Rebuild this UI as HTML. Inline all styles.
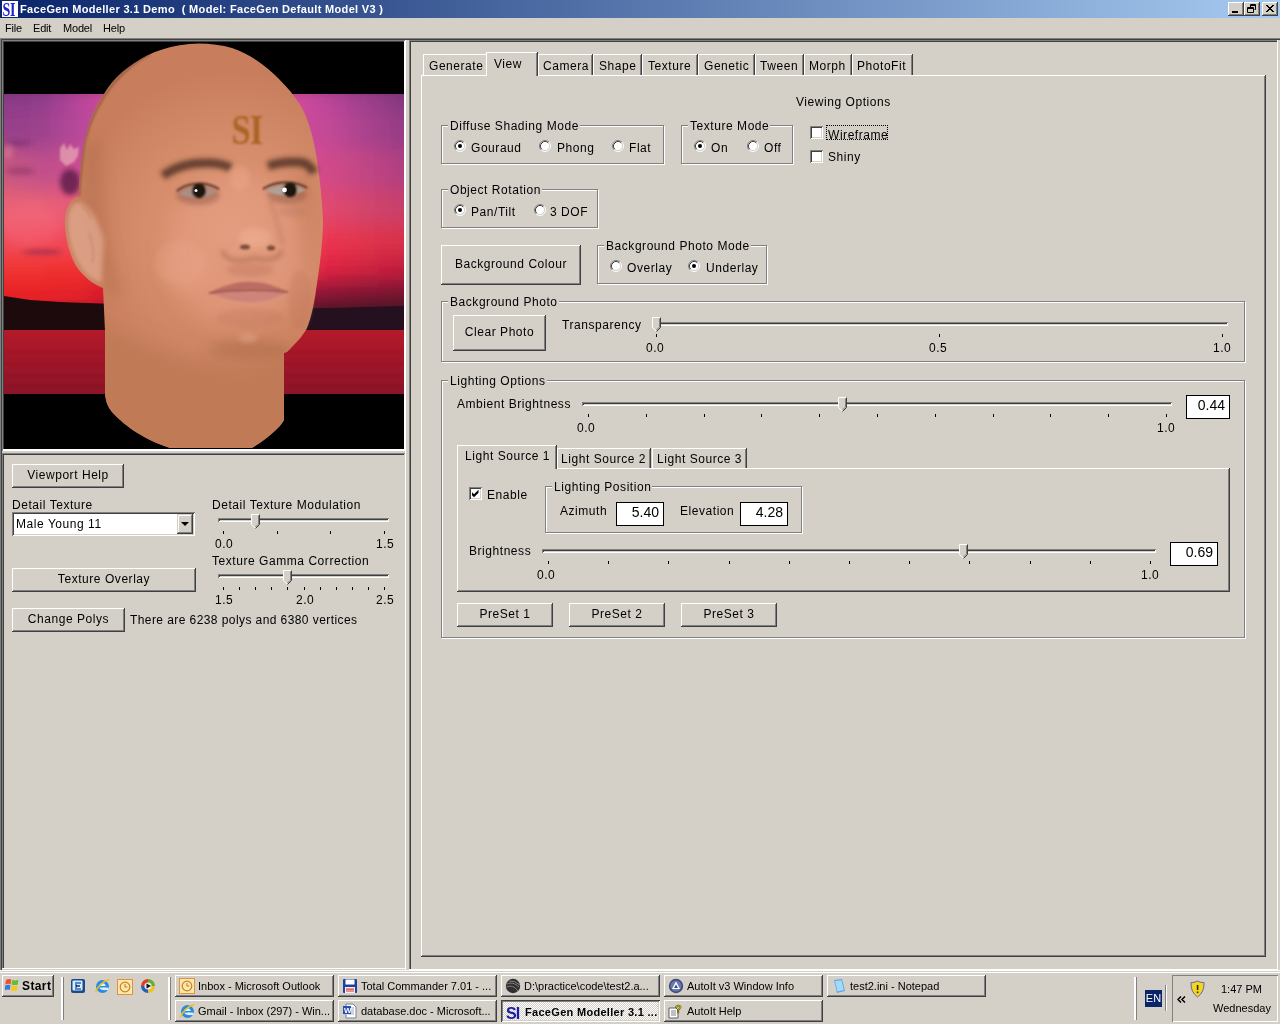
<!DOCTYPE html>
<html><head><meta charset="utf-8">
<style>
*{box-sizing:border-box}
html,body{margin:0;padding:0}
body{width:1280px;height:1024px;position:relative;overflow:hidden;will-change:transform;background:#d4d0c8;font-family:"Liberation Sans",sans-serif;color:#000}
.a{position:absolute}
.t{position:absolute;font-size:12px;letter-spacing:0.55px;line-height:14px;white-space:nowrap}
.s{position:absolute;font-size:11px;line-height:13px;white-space:nowrap}
.btn{position:absolute;background:#d4d0c8;box-shadow:inset -1px -1px #404040,inset 1px 1px #fff,inset -2px -2px #808080,inset 2px 2px #d4d0c8;font-size:12px;letter-spacing:0.55px;line-height:14px;white-space:nowrap;text-align:center}
.grp{position:absolute;border:1px solid #808080;box-shadow:1px 1px #fff,inset 1px 1px #fff}
.gl{position:absolute;font-size:12px;letter-spacing:0.55px;line-height:14px;white-space:nowrap;background:#d4d0c8;padding:0 1px 0 2px}
.edit{position:absolute;background:#fff;border:1px solid #000;font-size:14px;letter-spacing:0px;line-height:14px;text-align:right;white-space:nowrap}
.chk{position:absolute;width:13px;height:13px;background:#fff;box-shadow:inset 1px 1px #808080,inset -1px -1px #fff,inset 2px 2px #404040,inset -2px -2px #d4d0c8}
.trk{position:absolute;height:4px;box-shadow:inset 1px 1px #808080,inset -1px -1px #fff,inset 2px 2px #404040,inset -2px -2px #d4d0c8}
.tk{position:absolute;width:1px;height:3px;background:#000}
.tab{position:absolute;background:#d4d0c8;border-top:1px solid #fff;border-left:1px solid #fff;box-shadow:inset -1px 0 #808080,1px 0 #404040}
.hl{position:absolute;height:1px}
.vl{position:absolute;width:1px}
</style></head>
<body>
<!-- title bar -->
<div class="a" style="left:0;top:0;width:1280px;height:18px;background:linear-gradient(to right,#0a246a,#a6caf0)"></div>
<svg class="a" style="left:2px;top:1px" width="16" height="16" viewBox="0 0 16 16"><rect width="16" height="16" fill="#fff"/><text transform="translate(0.6 15.2) scale(0.74 1)" font-family="Liberation Serif" font-weight="bold" font-size="19" fill="#2222cc" letter-spacing="-0.5">SI</text></svg>

<div class="s" style="left:20px;top:3px;font-weight:bold;color:#fff;letter-spacing:0.33px">FaceGen Modeller 3.1 Demo&nbsp; ( Model: FaceGen Default Model V3 )</div>


<!-- caption buttons -->
<div class="btn" style="left:1228px;top:2px;width:16px;height:14px"></div>
<div class="a" style="left:1232px;top:11px;width:6px;height:2px;background:#000"></div>
<div class="btn" style="left:1244px;top:2px;width:16px;height:14px"></div>
<svg class="a" style="left:1247px;top:4px" width="10" height="10" viewBox="0 0 10 10"><path d="M3.5 0.5 H8.5 V5.5 H7.5 M3.5 1.5 H8.5 M3.5 0.5 V3" fill="none" stroke="#000"/><path d="M0.5 3.5 H6.5 V8.5 H0.5 Z M0.5 4.5 H6.5" fill="none" stroke="#000"/></svg>
<div class="btn" style="left:1262px;top:2px;width:16px;height:14px"></div>
<svg class="a" style="left:1265px;top:4px" width="10" height="9" viewBox="0 0 10 9"><path d="M1 1 L8 8 M2 1 L9 8 M8 1 L1 8 M9 1 L2 8" fill="none" stroke="#000" stroke-width="1"/></svg>

<!-- menu -->
<div class="s" style="left:5px;top:22px;letter-spacing:-0.2px">File</div>
<div class="s" style="left:33px;top:22px;letter-spacing:-0.2px">Edit</div>
<div class="s" style="left:63px;top:22px;letter-spacing:-0.2px">Model</div>
<div class="s" style="left:103px;top:22px;letter-spacing:-0.2px">Help</div>



<!-- viewport -->
<svg class="a" style="left:4px;top:42px" width="400" height="407" viewBox="4 42 400 407">
<defs>
<linearGradient id="sr0" x1="4" y1="0" x2="404" y2="0" gradientUnits="userSpaceOnUse"><stop offset="0.000" stop-color="#8a3a88"/><stop offset="0.090" stop-color="#8e3c8a"/><stop offset="0.190" stop-color="#b8449a"/><stop offset="0.265" stop-color="#d04a9c"/><stop offset="0.740" stop-color="#d04a9c"/><stop offset="0.815" stop-color="#b8449a"/><stop offset="0.915" stop-color="#9a3e8a"/><stop offset="1.000" stop-color="#84387f"/></linearGradient>
<linearGradient id="sr1" x1="4" y1="0" x2="404" y2="0" gradientUnits="userSpaceOnUse"><stop offset="0.000" stop-color="#98408a"/><stop offset="0.090" stop-color="#9c428c"/><stop offset="0.190" stop-color="#b8489a"/><stop offset="0.265" stop-color="#c84a98"/><stop offset="0.740" stop-color="#cc4a98"/><stop offset="0.815" stop-color="#c24896"/><stop offset="0.915" stop-color="#a8428c"/><stop offset="1.000" stop-color="#963c86"/></linearGradient>
<linearGradient id="sr2" x1="4" y1="0" x2="404" y2="0" gradientUnits="userSpaceOnUse"><stop offset="0.000" stop-color="#c85880"/><stop offset="0.090" stop-color="#c0508a"/><stop offset="0.190" stop-color="#c85090"/><stop offset="0.265" stop-color="#d05090"/><stop offset="0.740" stop-color="#d84c8c"/><stop offset="0.815" stop-color="#d04a88"/><stop offset="0.915" stop-color="#c04484"/><stop offset="1.000" stop-color="#b04080"/></linearGradient>
<linearGradient id="sr3" x1="4" y1="0" x2="404" y2="0" gradientUnits="userSpaceOnUse"><stop offset="0.000" stop-color="#e86272"/><stop offset="0.090" stop-color="#e86074"/><stop offset="0.190" stop-color="#e85a78"/><stop offset="0.265" stop-color="#e85478"/><stop offset="0.740" stop-color="#e84c74"/><stop offset="0.815" stop-color="#e0486e"/><stop offset="0.915" stop-color="#d0446c"/><stop offset="1.000" stop-color="#c8406a"/></linearGradient>
<linearGradient id="sr4" x1="4" y1="0" x2="404" y2="0" gradientUnits="userSpaceOnUse"><stop offset="0.000" stop-color="#f04c58"/><stop offset="0.090" stop-color="#f04a58"/><stop offset="0.190" stop-color="#f24858"/><stop offset="0.265" stop-color="#f04458"/><stop offset="0.740" stop-color="#f03c54"/><stop offset="0.815" stop-color="#ea3650"/><stop offset="0.915" stop-color="#e0344c"/><stop offset="1.000" stop-color="#d83048"/></linearGradient>
<linearGradient id="sr5" x1="4" y1="0" x2="404" y2="0" gradientUnits="userSpaceOnUse"><stop offset="0.000" stop-color="#f03430"/><stop offset="0.090" stop-color="#f03430"/><stop offset="0.190" stop-color="#f0302e"/><stop offset="0.265" stop-color="#e82a3c"/><stop offset="0.740" stop-color="#e82842"/><stop offset="0.815" stop-color="#e02442"/><stop offset="0.915" stop-color="#d02040"/><stop offset="1.000" stop-color="#c41e3c"/></linearGradient>
<linearGradient id="sr6" x1="4" y1="0" x2="404" y2="0" gradientUnits="userSpaceOnUse"><stop offset="0.000" stop-color="#e82428"/><stop offset="0.090" stop-color="#e82428"/><stop offset="0.190" stop-color="#e4222a"/><stop offset="0.265" stop-color="#d81c30"/><stop offset="0.740" stop-color="#a01a38"/><stop offset="0.815" stop-color="#901838"/><stop offset="0.915" stop-color="#801834"/><stop offset="1.000" stop-color="#781832"/></linearGradient>
<linearGradient id="sr7" x1="4" y1="0" x2="404" y2="0" gradientUnits="userSpaceOnUse"><stop offset="0.000" stop-color="#e01c24"/><stop offset="0.090" stop-color="#e01c24"/><stop offset="0.190" stop-color="#d81a26"/><stop offset="0.265" stop-color="#c01828"/><stop offset="0.740" stop-color="#601830"/><stop offset="0.815" stop-color="#501828"/><stop offset="0.915" stop-color="#501828"/><stop offset="1.000" stop-color="#501828"/></linearGradient>
<clipPath id="skyclip"><rect x="4" y="94" width="400" height="216"/></clipPath>
<linearGradient id="sea" x1="0" y1="330" x2="0" y2="394" gradientUnits="userSpaceOnUse">
<stop offset="0" stop-color="#b41a2a"/><stop offset="0.5" stop-color="#a01628"/><stop offset="1" stop-color="#8c1428"/>
</linearGradient>
<radialGradient id="skin" cx="230" cy="230" r="160" gradientUnits="userSpaceOnUse">
<stop offset="0" stop-color="#e09a7a"/><stop offset="0.55" stop-color="#d48c6a"/><stop offset="1" stop-color="#c87e5c"/>
</radialGradient>
<linearGradient id="neck" x1="0" y1="340" x2="0" y2="448" gradientUnits="userSpaceOnUse">
<stop offset="0" stop-color="#c98060"/><stop offset="1" stop-color="#c07c58"/>
</linearGradient>
<filter id="vb" x="-10%" y="-10%" width="120%" height="120%"><feGaussianBlur stdDeviation="6 10"/></filter>
<filter id="b1" x="-50%" y="-50%" width="200%" height="200%"><feGaussianBlur stdDeviation="1.2"/></filter>
<filter id="b2" x="-50%" y="-50%" width="200%" height="200%"><feGaussianBlur stdDeviation="2.5"/></filter>
<filter id="b3" x="-50%" y="-50%" width="200%" height="200%"><feGaussianBlur stdDeviation="6"/></filter>
<filter id="b4" x="-50%" y="-50%" width="200%" height="200%"><feGaussianBlur stdDeviation="10"/></filter>
</defs>
<rect x="4" y="41" width="400" height="408" fill="#000"/>
<g clip-path="url(#skyclip)"><g filter="url(#vb)">
<rect x="-20" y="80" width="440" height="32" fill="url(#sr0)"/>
<rect x="-20" y="112" width="440" height="38" fill="url(#sr1)"/>
<rect x="-20" y="150" width="440" height="40" fill="url(#sr2)"/>
<rect x="-20" y="190" width="440" height="35" fill="url(#sr3)"/>
<rect x="-20" y="225" width="440" height="30" fill="url(#sr4)"/>
<rect x="-20" y="255" width="440" height="25" fill="url(#sr5)"/>
<rect x="-20" y="280" width="440" height="20" fill="url(#sr6)"/>
<rect x="-20" y="300" width="440" height="20" fill="url(#sr7)"/>
</g>
<g filter="url(#b3)">
<ellipse cx="30" cy="225" rx="30" ry="22" fill="#f87080" opacity="0.35"/>
</g>
<g filter="url(#b2)">
<ellipse cx="18" cy="143" rx="14" ry="3" fill="#6a2868" opacity="0.5"/>
<ellipse cx="20" cy="171" rx="14" ry="4" fill="#7a2a5a" opacity="0.45"/>
<ellipse cx="70" cy="182" rx="10" ry="13" fill="#5a1a48" opacity="0.8"/>
<ellipse cx="42" cy="252" rx="20" ry="2.5" fill="#902a48" opacity="0.7"/>
<ellipse cx="8" cy="152" rx="5" ry="7" fill="#f09090" opacity="0.4"/>
</g>
<g filter="url(#b1)">
<path d="M60 148 L64 143 L67 150 L70 144 L74 149 L79 147 L78 156 L74 162 L66 166 L60 160 Z" fill="#f0b0b8" opacity="0.65"/>
</g>
</g>
<!-- land -->
<path d="M4 296 L30 300 L60 302 L100 303.5 L150 305 L300 309 L404 307 L404 331 L4 331 Z" fill="#1c0a0c"/>
<path d="M296 309 L404 306 L404 331 L296 331 Z" fill="#24101e"/>
<rect x="4" y="330" width="400" height="64" fill="url(#sea)"/>
<g opacity="0.22" stroke="#500818" stroke-width="1.2" filter="url(#b1)">
<line x1="4" y1="352" x2="404" y2="352"/><line x1="4" y1="364" x2="404" y2="364"/><line x1="4" y1="375" x2="404" y2="375"/><line x1="4" y1="386" x2="404" y2="386"/>
</g>
<!-- head -->
<path d="M199 43.5 C172 44 150 52 133 64 C118 74 110 84 104 94 C96 105 90 118 86 135 C82 150 80 170 78.5 196 C72 198 66 205 65 218 C64 232 68 252 76 266 C83 276 92 284 103 288 L105 330 L105 394 C106 402 108 407 112 412 C122 423 140 438 170 448 L252 448 C265 440 280 428 284 420 L284 353 L287 352 C296 343 303 336 307 328 C311 318 314 305 316 290 C320 265 323 240 323 220 C322 200 320 180 317 160 C314 140 310 125 304 112 C298 100 290 90 278 78 C265 65 250 54 232 48 C222 45 210 43.5 199 43.5 Z" fill="url(#skin)"/>
<clipPath id="headclip"><path d="M199 43.5 C172 44 150 52 133 64 C118 74 110 84 104 94 C96 105 90 118 86 135 C82 150 80 170 78.5 196 C72 198 66 205 65 218 C64 232 68 252 76 266 C83 276 92 284 103 288 L105 330 L105 394 C106 402 108 407 112 412 C122 423 140 438 170 448 L252 448 C265 440 280 428 284 420 L284 353 L287 352 C296 343 303 336 307 328 C311 318 314 305 316 290 C320 265 323 240 323 220 C322 200 320 180 317 160 C314 140 310 125 304 112 C298 100 290 90 278 78 C265 65 250 54 232 48 C222 45 210 43.5 199 43.5 Z"/></clipPath>
<g clip-path="url(#headclip)">
<g filter="url(#b4)">
<path d="M90 320 C140 345 200 372 250 368 C270 366 284 358 300 345 L300 460 L90 460 Z" fill="#c07a56"/>
</g>
<g filter="url(#b3)">
<path d="M84 140 C80 180 82 220 95 260 L110 300 L122 292 C110 250 102 200 104 140 Z" fill="#b06c4c" opacity="0.4"/>
<ellipse cx="250" cy="350" rx="42" ry="10" fill="#a86848" opacity="0.5"/>
<ellipse cx="185" cy="270" rx="25" ry="22" fill="#e8a080" opacity="0.35"/>
<ellipse cx="305" cy="220" rx="12" ry="50" fill="#c07858" opacity="0.4"/>
</g>
<g filter="url(#b1)"><path d="M150 54 C138 60 125 70 113 84 C100 100 90 120 85 140 C81 160 80 180 79 196" fill="none" stroke="#7a4a36" stroke-width="2" opacity="0.7"/></g>
<!-- ear -->
<g filter="url(#b2)">
<path d="M76 202 C69 206 66 215 67 228 C68 245 74 262 84 273 C90 279 96 282 101 284 L104 240 C100 225 92 205 76 202 Z" fill="#e0a890" opacity="0.75"/>
</g>
<g filter="url(#b1)">
<path d="M83 208 C89 212 90 216 90 220" fill="none" stroke="#8a5a48" stroke-width="1.3" opacity="0.6" stroke-dasharray="1.5 2"/>
<path d="M89 233 C93 243 94 255 92 262" fill="none" stroke="#8a5a48" stroke-width="1.3" opacity="0.6" stroke-dasharray="1.5 2"/>
<path d="M78 200 C71 203 67 210 67 222 C67 238 72 254 80 266 C86 275 94 281 101 284" fill="none" stroke="#b07058" stroke-width="1" opacity="0.5"/>
</g>
</g>
<!-- SI -->
<text x="0" y="0" transform="translate(231.5 143.5) scale(0.86 1.05)" font-family="Liberation Serif" font-weight="bold" font-size="40" fill="#ac6426" letter-spacing="-1" filter="url(#b1)">SI</text>
<!-- brows -->
<g filter="url(#b4)">
<ellipse cx="238" cy="250" rx="70" ry="75" fill="#e8a088" opacity="0.45"/>
</g>
<g filter="url(#b2)">
<path d="M163 176 C173 168 188 163 206 163 C218 163 226 165 231 168" fill="none" stroke="#4a2a20" stroke-width="9" opacity="0.8"/>
<path d="M268 166 C279 162 294 161 304 163 C309 165 312 169 314 173" fill="none" stroke="#4a2a20" stroke-width="9" opacity="0.8"/>
<ellipse cx="198" cy="195" rx="22" ry="10" fill="#8a5444" opacity="0.45"/>
<ellipse cx="287" cy="194" rx="20" ry="10" fill="#8a5444" opacity="0.45"/>
<ellipse cx="292" cy="212" rx="14" ry="5" fill="#9a6050" opacity="0.2"/>
<ellipse cx="240" cy="178" rx="10" ry="12" fill="#f0b090" opacity="0.35"/>
<path d="M222 250 C225 262 240 262 255 258 C270 262 280 258 282 250" fill="none" stroke="#9a5a48" stroke-width="4" opacity="0.5"/>
<ellipse cx="255" cy="238" rx="16" ry="10" fill="#f0b498" opacity="0.5"/>
<path d="M270 200 C275 215 280 230 283 245" fill="none" stroke="#a86a58" stroke-width="4" opacity="0.35"/>
<ellipse cx="180" cy="262" rx="26" ry="22" fill="#eaa890" opacity="0.2"/>
<ellipse cx="300" cy="300" rx="12" ry="30" fill="#b87058" opacity="0.3"/>
</g>
<!-- eyes -->
<g filter="url(#b1)">
<path d="M179 194 C188 186 205 185 216 192 C205 199 190 199 179 194 Z" fill="#a89088"/>
<circle cx="199" cy="191" r="7.2" fill="#1e1210"/>
<path d="M266 191 C276 184 294 183 305 190 C295 197 278 197 266 191 Z" fill="#b0a098"/>
<circle cx="290" cy="190" r="7.2" fill="#1e1210"/>
<path d="M177 191 C188 182 205 181 219 189" fill="none" stroke="#2a1810" stroke-width="2" opacity="0.8"/>
<path d="M263 189 C276 181 294 180 307 188" fill="none" stroke="#2a1810" stroke-width="2" opacity="0.8"/>
</g>
<circle cx="196" cy="190.5" r="1.5" fill="#fff"/>
<circle cx="284.5" cy="190" r="2.4" fill="#fff"/>
<!-- nose -->
<g filter="url(#b1)">
<ellipse cx="245" cy="247" rx="5" ry="2.5" fill="#5a3020" opacity="0.75"/>
<ellipse cx="271" cy="248" rx="4" ry="2.5" fill="#5a3020" opacity="0.75"/>
</g>
<!-- mouth -->
<g filter="url(#b2)">
<ellipse cx="250" cy="270" rx="24" ry="7" fill="#a86048" opacity="0.25"/>
<ellipse cx="250" cy="318" rx="34" ry="10" fill="#b87058" opacity="0.3"/>
<ellipse cx="248" cy="338" rx="9" ry="5" fill="#f0b8a0" opacity="0.3"/>
</g>
<g filter="url(#b1)">
<path d="M209 293 C222 286 238 281 252 282 C266 282 278 287 288 292 C270 291 240 290 209 293 Z" fill="#b86860" opacity="0.9"/>
<path d="M211 293 C225 300 240 302 252 302 C266 302 278 298 287 292 C270 292 240 292 211 293 Z" fill="#cc827a" opacity="0.9"/>
<path d="M209 293 C235 290 262 290 288 292" fill="none" stroke="#7a3c38" stroke-width="1.4" opacity="0.8"/>
</g>
</svg>

<!-- frames -->
<div class="hl" style="left:0;top:38px;width:1280px;background:#808080"></div>
<div class="hl" style="left:0;top:39px;width:1280px;background:#404040"></div>
<div class="vl" style="left:0;top:38px;height:932px;background:#808080"></div>
<div class="vl" style="left:1px;top:39px;height:931px;background:#404040"></div>
<div class="hl" style="left:2px;top:40px;width:404px;background:#808080"></div>
<div class="hl" style="left:3px;top:41px;width:401px;background:#404040"></div>
<div class="vl" style="left:2px;top:40px;height:411px;background:#808080"></div>
<div class="vl" style="left:3px;top:41px;height:409px;background:#404040"></div>
<div class="vl" style="left:404px;top:41px;height:410px;background:#fff"></div>
<div class="vl" style="left:405px;top:40px;height:930px;background:#fff"></div>
<div class="hl" style="left:3px;top:449px;width:402px;height:2px;background:#fff"></div>
<!-- lower panel -->
<div class="hl" style="left:2px;top:453px;width:403px;background:#808080"></div>
<div class="hl" style="left:2px;top:454px;width:402px;background:#404040"></div>
<div class="vl" style="left:2px;top:453px;height:515px;background:#808080"></div>
<div class="vl" style="left:3px;top:454px;height:514px;background:#404040"></div>
<div class="hl" style="left:2px;top:968px;width:404px;background:#fff"></div>
<!-- right pane -->
<div class="hl" style="left:409px;top:40px;width:869px;background:#808080"></div>
<div class="hl" style="left:410px;top:41px;width:867px;background:#404040"></div>
<div class="vl" style="left:409px;top:40px;height:930px;background:#808080"></div>
<div class="vl" style="left:410px;top:41px;height:928px;background:#404040"></div>
<div class="vl" style="left:1277px;top:40px;height:930px;background:#fff"></div>
<div class="hl" style="left:409px;top:969px;width:869px;background:#fff"></div>
<div class="hl" style="left:0;top:970px;width:1280px;background:#fff"></div>
<div class="hl" style="left:0;top:972px;width:1280px;background:#fff"></div>

<!-- left controls -->
<div class="btn" style="left:12px;top:464px;width:112px;height:24px;padding-top:4px">Viewport Help</div>
<div class="t" style="left:12px;top:498px">Detail Texture</div>
<div class="a" style="left:12px;top:512px;width:183px;height:24px;background:#fff;box-shadow:inset 1px 1px #808080,inset -1px -1px #fff,inset 2px 2px #404040,inset -2px -2px #d4d0c8"></div>
<div class="t" style="left:16px;top:517px">Male Young 11</div>
<div class="a" style="left:177px;top:514px;width:16px;height:20px;background:#d4d0c8;box-shadow:inset -1px -1px #404040,inset 1px 1px #d4d0c8,inset -2px -2px #808080,inset 2px 2px #fff"></div>
<div class="a" style="left:181px;top:522px;width:0;height:0;border-left:4px solid transparent;border-right:4px solid transparent;border-top:4px solid #000"></div>
<div class="btn" style="left:12px;top:568px;width:184px;height:24px;padding-top:4px">Texture Overlay</div>
<div class="btn" style="left:12px;top:608px;width:113px;height:24px;padding-top:4px">Change Polys</div>
<div class="t" style="left:130px;top:613px;letter-spacing:0.42px">There are 6238 polys and 6380 vertices</div>

<div class="t" style="left:212px;top:498px">Detail Texture Modulation</div>
<div class="trk" style="left:218px;top:518px;width:171px"></div>
<svg class="a" style="left:251px;top:514px" width="10" height="16" viewBox="0 0 10 16"><path d="M0.5 0.5 H8.5 V10.5 L4.5 14.5 L0.5 10.5 Z" fill="#d4d0c8"/><path d="M4.5 14.5 L0.5 10.5 V0.5 H8.5" fill="none" stroke="#fff"/><path d="M8.5 0.5 V10.5 L4.5 14.5" fill="none" stroke="#404040"/><path d="M7.5 1.5 V10 L4.5 13" fill="none" stroke="#808080"/></svg>
<div class="tk" style="left:223px;top:531px"></div><div class="tk" style="left:277px;top:531px"></div><div class="tk" style="left:330px;top:531px"></div><div class="tk" style="left:384px;top:531px"></div>
<div class="t" style="left:215px;top:537px">0.0</div>
<div class="t" style="left:376px;top:537px">1.5</div>

<div class="t" style="left:212px;top:554px">Texture Gamma Correction</div>
<div class="trk" style="left:218px;top:574px;width:171px"></div>
<svg class="a" style="left:283px;top:570px" width="10" height="16" viewBox="0 0 10 16"><path d="M0.5 0.5 H8.5 V10.5 L4.5 14.5 L0.5 10.5 Z" fill="#d4d0c8"/><path d="M4.5 14.5 L0.5 10.5 V0.5 H8.5" fill="none" stroke="#fff"/><path d="M8.5 0.5 V10.5 L4.5 14.5" fill="none" stroke="#404040"/><path d="M7.5 1.5 V10 L4.5 13" fill="none" stroke="#808080"/></svg>
<div class="tk" style="left:223px;top:587px"></div><div class="tk" style="left:239px;top:587px"></div><div class="tk" style="left:255px;top:587px"></div><div class="tk" style="left:271px;top:587px"></div><div class="tk" style="left:287px;top:587px"></div><div class="tk" style="left:304px;top:587px"></div><div class="tk" style="left:320px;top:587px"></div><div class="tk" style="left:336px;top:587px"></div><div class="tk" style="left:352px;top:587px"></div><div class="tk" style="left:368px;top:587px"></div><div class="tk" style="left:384px;top:587px"></div>
<div class="t" style="left:215px;top:593px">1.5</div>
<div class="t" style="left:296px;top:593px">2.0</div>
<div class="t" style="left:376px;top:593px">2.5</div>

<!-- right pane controls -->
<div class="hl" style="left:421px;top:75px;width:845px;background:#fff"></div>
<div class="vl" style="left:421px;top:75px;height:882px;background:#fff"></div>
<div class="vl" style="left:1264px;top:76px;height:880px;background:#808080"></div>
<div class="vl" style="left:1265px;top:75px;height:882px;background:#404040"></div>
<div class="hl" style="left:422px;top:955px;width:843px;background:#808080"></div>
<div class="hl" style="left:421px;top:956px;width:845px;background:#404040"></div>
<div class="tab" style="left:423px;top:54px;width:64px;height:21px"></div>
<div class="t" style="left:429px;top:59px">Generate</div>
<div class="tab" style="left:538px;top:54px;width:54px;height:21px"></div>
<div class="t" style="left:543px;top:59px">Camera</div>
<div class="tab" style="left:593px;top:54px;width:48px;height:21px"></div>
<div class="t" style="left:599px;top:59px">Shape</div>
<div class="tab" style="left:642px;top:54px;width:55px;height:21px"></div>
<div class="t" style="left:648px;top:59px">Texture</div>
<div class="tab" style="left:698px;top:54px;width:56px;height:21px"></div>
<div class="t" style="left:704px;top:59px">Genetic</div>
<div class="tab" style="left:755px;top:54px;width:48px;height:21px"></div>
<div class="t" style="left:760px;top:59px">Tween</div>
<div class="tab" style="left:804px;top:54px;width:47px;height:21px"></div>
<div class="t" style="left:809px;top:59px">Morph</div>
<div class="tab" style="left:852px;top:54px;width:60px;height:21px"></div>
<div class="t" style="left:857px;top:59px">PhotoFit</div>
<div class="tab" style="left:486px;top:52px;width:51px;height:24px;border-bottom:0"></div>
<div class="t" style="left:494px;top:57px">View</div>
<div class="t" style="left:796px;top:95px">Viewing Options</div>
<div class="grp" style="left:441px;top:125px;width:223px;height:39px"></div><div class="gl" style="left:448px;top:119px">Diffuse Shading Mode</div>
<svg class="a" style="left:454px;top:140px" width="12" height="12" viewBox="0 0 12 12"><circle cx="6" cy="6" r="4.5" fill="#fff"/><path d="M2.11 9.89 A5.5 5.5 0 0 1 9.89 2.11" fill="none" stroke="#808080" stroke-width="1"/><path d="M2.82 9.18 A4.5 4.5 0 0 1 9.18 2.82" fill="none" stroke="#404040" stroke-width="1"/><path d="M9.89 2.11 A5.5 5.5 0 0 1 2.11 9.89" fill="none" stroke="#fff" stroke-width="1"/><path d="M9.18 2.82 A4.5 4.5 0 0 1 2.82 9.18" fill="none" stroke="#d4d0c8" stroke-width="1"/><circle cx="6" cy="6" r="2" fill="#000"/></svg>
<div class="t" style="left:471px;top:141px">Gouraud</div>
<svg class="a" style="left:539px;top:140px" width="12" height="12" viewBox="0 0 12 12"><circle cx="6" cy="6" r="4.5" fill="#fff"/><path d="M2.11 9.89 A5.5 5.5 0 0 1 9.89 2.11" fill="none" stroke="#808080" stroke-width="1"/><path d="M2.82 9.18 A4.5 4.5 0 0 1 9.18 2.82" fill="none" stroke="#404040" stroke-width="1"/><path d="M9.89 2.11 A5.5 5.5 0 0 1 2.11 9.89" fill="none" stroke="#fff" stroke-width="1"/><path d="M9.18 2.82 A4.5 4.5 0 0 1 2.82 9.18" fill="none" stroke="#d4d0c8" stroke-width="1"/></svg>
<div class="t" style="left:557px;top:141px">Phong</div>
<svg class="a" style="left:612px;top:140px" width="12" height="12" viewBox="0 0 12 12"><circle cx="6" cy="6" r="4.5" fill="#fff"/><path d="M2.11 9.89 A5.5 5.5 0 0 1 9.89 2.11" fill="none" stroke="#808080" stroke-width="1"/><path d="M2.82 9.18 A4.5 4.5 0 0 1 9.18 2.82" fill="none" stroke="#404040" stroke-width="1"/><path d="M9.89 2.11 A5.5 5.5 0 0 1 2.11 9.89" fill="none" stroke="#fff" stroke-width="1"/><path d="M9.18 2.82 A4.5 4.5 0 0 1 2.82 9.18" fill="none" stroke="#d4d0c8" stroke-width="1"/></svg>
<div class="t" style="left:629px;top:141px">Flat</div>
<div class="grp" style="left:681px;top:125px;width:112px;height:39px"></div><div class="gl" style="left:688px;top:119px">Texture Mode</div>
<svg class="a" style="left:694px;top:140px" width="12" height="12" viewBox="0 0 12 12"><circle cx="6" cy="6" r="4.5" fill="#fff"/><path d="M2.11 9.89 A5.5 5.5 0 0 1 9.89 2.11" fill="none" stroke="#808080" stroke-width="1"/><path d="M2.82 9.18 A4.5 4.5 0 0 1 9.18 2.82" fill="none" stroke="#404040" stroke-width="1"/><path d="M9.89 2.11 A5.5 5.5 0 0 1 2.11 9.89" fill="none" stroke="#fff" stroke-width="1"/><path d="M9.18 2.82 A4.5 4.5 0 0 1 2.82 9.18" fill="none" stroke="#d4d0c8" stroke-width="1"/><circle cx="6" cy="6" r="2" fill="#000"/></svg>
<div class="t" style="left:711px;top:141px">On</div>
<svg class="a" style="left:747px;top:140px" width="12" height="12" viewBox="0 0 12 12"><circle cx="6" cy="6" r="4.5" fill="#fff"/><path d="M2.11 9.89 A5.5 5.5 0 0 1 9.89 2.11" fill="none" stroke="#808080" stroke-width="1"/><path d="M2.82 9.18 A4.5 4.5 0 0 1 9.18 2.82" fill="none" stroke="#404040" stroke-width="1"/><path d="M9.89 2.11 A5.5 5.5 0 0 1 2.11 9.89" fill="none" stroke="#fff" stroke-width="1"/><path d="M9.18 2.82 A4.5 4.5 0 0 1 2.82 9.18" fill="none" stroke="#d4d0c8" stroke-width="1"/></svg>
<div class="t" style="left:764px;top:141px">Off</div>
<div class="chk" style="left:810px;top:126px"></div>
<div class="t" style="left:828px;top:128px">Wireframe</div>
<div class="a" style="left:826px;top:125px;width:62px;height:15px;border:1px dotted #000"></div>
<div class="chk" style="left:810px;top:150px"></div>
<div class="t" style="left:828px;top:150px">Shiny</div>
<div class="grp" style="left:441px;top:189px;width:157px;height:39px"></div><div class="gl" style="left:448px;top:183px">Object Rotation</div>
<svg class="a" style="left:454px;top:204px" width="12" height="12" viewBox="0 0 12 12"><circle cx="6" cy="6" r="4.5" fill="#fff"/><path d="M2.11 9.89 A5.5 5.5 0 0 1 9.89 2.11" fill="none" stroke="#808080" stroke-width="1"/><path d="M2.82 9.18 A4.5 4.5 0 0 1 9.18 2.82" fill="none" stroke="#404040" stroke-width="1"/><path d="M9.89 2.11 A5.5 5.5 0 0 1 2.11 9.89" fill="none" stroke="#fff" stroke-width="1"/><path d="M9.18 2.82 A4.5 4.5 0 0 1 2.82 9.18" fill="none" stroke="#d4d0c8" stroke-width="1"/><circle cx="6" cy="6" r="2" fill="#000"/></svg>
<div class="t" style="left:471px;top:205px">Pan/Tilt</div>
<svg class="a" style="left:534px;top:204px" width="12" height="12" viewBox="0 0 12 12"><circle cx="6" cy="6" r="4.5" fill="#fff"/><path d="M2.11 9.89 A5.5 5.5 0 0 1 9.89 2.11" fill="none" stroke="#808080" stroke-width="1"/><path d="M2.82 9.18 A4.5 4.5 0 0 1 9.18 2.82" fill="none" stroke="#404040" stroke-width="1"/><path d="M9.89 2.11 A5.5 5.5 0 0 1 2.11 9.89" fill="none" stroke="#fff" stroke-width="1"/><path d="M9.18 2.82 A4.5 4.5 0 0 1 2.82 9.18" fill="none" stroke="#d4d0c8" stroke-width="1"/></svg>
<div class="t" style="left:550px;top:205px">3 DOF</div>
<div class="btn" style="left:441px;top:245px;width:140px;height:40px;padding-top:12px">Background Colour</div>
<div class="grp" style="left:597px;top:245px;width:170px;height:39px"></div><div class="gl" style="left:604px;top:239px">Background Photo Mode</div>
<svg class="a" style="left:610px;top:260px" width="12" height="12" viewBox="0 0 12 12"><circle cx="6" cy="6" r="4.5" fill="#fff"/><path d="M2.11 9.89 A5.5 5.5 0 0 1 9.89 2.11" fill="none" stroke="#808080" stroke-width="1"/><path d="M2.82 9.18 A4.5 4.5 0 0 1 9.18 2.82" fill="none" stroke="#404040" stroke-width="1"/><path d="M9.89 2.11 A5.5 5.5 0 0 1 2.11 9.89" fill="none" stroke="#fff" stroke-width="1"/><path d="M9.18 2.82 A4.5 4.5 0 0 1 2.82 9.18" fill="none" stroke="#d4d0c8" stroke-width="1"/></svg>
<div class="t" style="left:627px;top:261px">Overlay</div>
<svg class="a" style="left:688px;top:260px" width="12" height="12" viewBox="0 0 12 12"><circle cx="6" cy="6" r="4.5" fill="#fff"/><path d="M2.11 9.89 A5.5 5.5 0 0 1 9.89 2.11" fill="none" stroke="#808080" stroke-width="1"/><path d="M2.82 9.18 A4.5 4.5 0 0 1 9.18 2.82" fill="none" stroke="#404040" stroke-width="1"/><path d="M9.89 2.11 A5.5 5.5 0 0 1 2.11 9.89" fill="none" stroke="#fff" stroke-width="1"/><path d="M9.18 2.82 A4.5 4.5 0 0 1 2.82 9.18" fill="none" stroke="#d4d0c8" stroke-width="1"/><circle cx="6" cy="6" r="2" fill="#000"/></svg>
<div class="t" style="left:706px;top:261px">Underlay</div>
<div class="grp" style="left:441px;top:301px;width:804px;height:61px"></div><div class="gl" style="left:448px;top:295px">Background Photo</div>
<div class="btn" style="left:453px;top:315px;width:93px;height:36px;padding-top:10px">Clear Photo</div>
<div class="t" style="left:562px;top:318px">Transparency</div>
<div class="trk" style="left:654px;top:322px;width:574px"></div>
<svg class="a" style="left:652px;top:317px" width="10" height="16" viewBox="0 0 10 16"><path d="M0.5 0.5 H8.5 V10.5 L4.5 14.5 L0.5 10.5 Z" fill="#d4d0c8"/><path d="M4.5 14.5 L0.5 10.5 V0.5 H8.5" fill="none" stroke="#fff"/><path d="M8.5 0.5 V10.5 L4.5 14.5" fill="none" stroke="#404040"/><path d="M7.5 1.5 V10 L4.5 13" fill="none" stroke="#808080"/></svg>
<div class="tk" style="left:656px;top:334px"></div><div class="tk" style="left:939px;top:334px"></div><div class="tk" style="left:1222px;top:334px"></div>
<div class="t" style="left:646px;top:341px">0.0</div>
<div class="t" style="left:929px;top:341px">0.5</div>
<div class="t" style="left:1213px;top:341px">1.0</div>
<div class="grp" style="left:441px;top:380px;width:804px;height:258px"></div><div class="gl" style="left:448px;top:374px">Lighting Options</div>
<div class="t" style="left:457px;top:397px">Ambient Brightness</div>
<div class="trk" style="left:582px;top:402px;width:590px"></div>
<svg class="a" style="left:838px;top:397px" width="10" height="16" viewBox="0 0 10 16"><path d="M0.5 0.5 H8.5 V10.5 L4.5 14.5 L0.5 10.5 Z" fill="#d4d0c8"/><path d="M4.5 14.5 L0.5 10.5 V0.5 H8.5" fill="none" stroke="#fff"/><path d="M8.5 0.5 V10.5 L4.5 14.5" fill="none" stroke="#404040"/><path d="M7.5 1.5 V10 L4.5 13" fill="none" stroke="#808080"/></svg>
<div class="tk" style="left:588px;top:414px"></div><div class="tk" style="left:646px;top:414px"></div><div class="tk" style="left:704px;top:414px"></div><div class="tk" style="left:761px;top:414px"></div><div class="tk" style="left:819px;top:414px"></div><div class="tk" style="left:877px;top:414px"></div><div class="tk" style="left:935px;top:414px"></div><div class="tk" style="left:993px;top:414px"></div><div class="tk" style="left:1050px;top:414px"></div><div class="tk" style="left:1108px;top:414px"></div><div class="tk" style="left:1166px;top:414px"></div>
<div class="t" style="left:577px;top:421px">0.0</div>
<div class="t" style="left:1157px;top:421px">1.0</div>
<div class="edit" style="left:1186px;top:395px;width:44px;height:24px;padding:2px 4px 0 0">0.44</div>
<div class="hl" style="left:457px;top:468px;width:773px;background:#fff"></div>
<div class="vl" style="left:457px;top:468px;height:124px;background:#fff"></div>
<div class="vl" style="left:1228px;top:469px;height:122px;background:#808080"></div>
<div class="vl" style="left:1229px;top:468px;height:124px;background:#404040"></div>
<div class="hl" style="left:458px;top:590px;width:771px;background:#808080"></div>
<div class="hl" style="left:457px;top:591px;width:773px;background:#404040"></div>
<div class="tab" style="left:557px;top:448px;width:93px;height:20px"></div>
<div class="t" style="left:561px;top:452px">Light Source 2</div>
<div class="tab" style="left:652px;top:448px;width:94px;height:20px"></div>
<div class="t" style="left:657px;top:452px">Light Source 3</div>
<div class="tab" style="left:457px;top:445px;width:99px;height:24px;border-bottom:0"></div>
<div class="t" style="left:465px;top:449px">Light Source 1</div>
<div class="chk" style="left:469px;top:487px"></div>
<svg class="a" style="left:471px;top:489px" width="9" height="9" viewBox="0 0 9 9"><path d="M1 3.2 L3 5.2 L7.5 0.8 V3.8 L3 8.2 L1 6.2 Z" fill="#000"/></svg>
<div class="t" style="left:487px;top:488px">Enable</div>
<div class="grp" style="left:545px;top:486px;width:257px;height:47px"></div><div class="gl" style="left:552px;top:480px">Lighting Position</div>
<div class="t" style="left:560px;top:504px">Azimuth</div>
<div class="edit" style="left:616px;top:502px;width:48px;height:24px;padding:2px 4px 0 0">5.40</div>
<div class="t" style="left:680px;top:504px">Elevation</div>
<div class="edit" style="left:740px;top:502px;width:48px;height:24px;padding:2px 4px 0 0">4.28</div>
<div class="t" style="left:469px;top:544px">Brightness</div>
<div class="trk" style="left:542px;top:549px;width:614px"></div>
<svg class="a" style="left:959px;top:544px" width="10" height="16" viewBox="0 0 10 16"><path d="M0.5 0.5 H8.5 V10.5 L4.5 14.5 L0.5 10.5 Z" fill="#d4d0c8"/><path d="M4.5 14.5 L0.5 10.5 V0.5 H8.5" fill="none" stroke="#fff"/><path d="M8.5 0.5 V10.5 L4.5 14.5" fill="none" stroke="#404040"/><path d="M7.5 1.5 V10 L4.5 13" fill="none" stroke="#808080"/></svg>
<div class="tk" style="left:548px;top:561px"></div><div class="tk" style="left:608px;top:561px"></div><div class="tk" style="left:668px;top:561px"></div><div class="tk" style="left:729px;top:561px"></div><div class="tk" style="left:789px;top:561px"></div><div class="tk" style="left:849px;top:561px"></div><div class="tk" style="left:909px;top:561px"></div><div class="tk" style="left:969px;top:561px"></div><div class="tk" style="left:1030px;top:561px"></div><div class="tk" style="left:1090px;top:561px"></div><div class="tk" style="left:1150px;top:561px"></div>
<div class="t" style="left:537px;top:568px">0.0</div>
<div class="t" style="left:1141px;top:568px">1.0</div>
<div class="edit" style="left:1170px;top:542px;width:48px;height:24px;padding:2px 4px 0 0">0.69</div>
<div class="btn" style="left:457px;top:603px;width:96px;height:24px;padding-top:4px">PreSet 1</div>
<div class="btn" style="left:569px;top:603px;width:96px;height:24px;padding-top:4px">PreSet 2</div>
<div class="btn" style="left:681px;top:603px;width:96px;height:24px;padding-top:4px">PreSet 3</div>
<!-- window bottom & taskbar -->

<!-- taskbar -->
<div class="hl" style="left:0;top:971px;width:1280px;background:#d4d0c8"></div>
<div class="btn" style="left:2px;top:975px;width:52px;height:22px"></div>
<svg class="a" style="left:5px;top:978px" width="14" height="14" viewBox="0 0 14 14">
<g filter="none"><path d="M1 2 Q3.5 0.5 6.3 1.5 L5.6 6.2 Q3 5.3 0.3 6.6 Z" fill="#f0502a"/>
<path d="M7.3 1.8 Q10 3 13.5 1.8 L12.8 6.5 Q9.8 7.6 6.6 6.4 Z" fill="#60c030"/>
<path d="M0.2 7.6 Q3 6.3 5.5 7.2 L4.8 12 Q2.3 11 -0.3 12.3 Z" fill="#3a78e0"/>
<path d="M6.5 7.4 Q9.6 8.6 12.7 7.5 L12 12.3 Q9 13.5 5.8 12.2 Z" fill="#f8c818"/></g></svg>
<div class="a" style="left:22px;top:979px;font:bold 12px/14px 'Liberation Sans',sans-serif;letter-spacing:0.4px">Start</div>
<div class="vl" style="left:61px;top:977px;height:43px;width:2px;background:#fff"></div><div class="vl" style="left:63px;top:977px;height:43px;background:#808080"></div>
<div class="vl" style="left:168px;top:977px;height:43px;width:2px;background:#fff"></div><div class="vl" style="left:170px;top:977px;height:43px;background:#808080"></div>
<svg class="a" style="left:70px;top:978px" width="17" height="17" viewBox="0 0 17 17"><rect x="1" y="1" width="14" height="14" rx="2" fill="#1a4a8a"/><rect x="2.5" y="2.5" width="10" height="10" rx="1" fill="#d8ecff"/><path d="M5 4 H11 V6 H7 V10 H11 V12 H5 Z" fill="#4a8ad8"/><path d="M6 8 H10" stroke="#000" stroke-width="1.2"/></svg>
<svg class="a" style="left:94px;top:978px" width="17" height="17" viewBox="0 0 17 17"><circle cx="8.5" cy="8.5" r="6.5" fill="#2a8ae0"/><circle cx="8.5" cy="8.5" r="3.2" fill="#d8f0ff"/><rect x="4" y="8" width="10" height="1.6" fill="#2a8ae0"/><rect x="8.5" y="9.6" width="6" height="2.5" fill="#d8f0ff"/><path d="M1.5 14.5 C3 9 9 3 15.5 1.5" fill="none" stroke="#f0c020" stroke-width="1.6"/></svg>
<svg class="a" style="left:117px;top:979px" width="16" height="16" viewBox="0 0 16 16"><rect x="0.5" y="0.5" width="15" height="15" fill="#fde8a8" stroke="#e09040"/><circle cx="8" cy="8" r="4.8" fill="none" stroke="#c08030" stroke-width="1.2"/><path d="M8 5 V8 H10.5" fill="none" stroke="#c08030" stroke-width="1.1"/></svg>
<svg class="a" style="left:140px;top:978px" width="16" height="16" viewBox="0 0 16 16"><path d="M8 1 A7 7 0 0 1 15 8 L11 8 A3 3 0 0 0 8 5 Z" fill="#60b030"/><path d="M15 8 A7 7 0 0 1 8 15 L8 11 A3 3 0 0 0 11 8 Z" fill="#f0c020"/><path d="M8 15 A7 7 0 0 1 1 8 L5 8 A3 3 0 0 0 8 11 Z" fill="#2060c0"/><path d="M1 8 A7 7 0 0 1 8 1 L8 5 A3 3 0 0 0 5 8 Z" fill="#e04020"/><circle cx="8" cy="8" r="3.6" fill="#e8e8f0"/><path d="M6.5 5.5 L11 8 L6.5 10.5 Z" fill="#101020"/></svg>
<div class="btn" style="left:175px;top:975px;width:159px;height:22px"></div>
<svg class="a" style="left:179px;top:978px" width="16" height="16" viewBox="0 0 16 16"><rect x="0.5" y="0.5" width="15" height="15" fill="#fde8a8" stroke="#e09040"/><circle cx="8" cy="8" r="4.8" fill="none" stroke="#c08030" stroke-width="1.2"/><path d="M8 5 V8 H10.5" fill="none" stroke="#c08030" stroke-width="1.1"/></svg>
<div class="s" style="left:198px;top:980px">Inbox - Microsoft Outlook</div>
<div class="btn" style="left:338px;top:975px;width:159px;height:22px"></div>
<svg class="a" style="left:342px;top:978px" width="16" height="16" viewBox="0 0 16 16"><rect x="1" y="1" width="14" height="14" rx="1" fill="#2040a0"/><rect x="3.5" y="1.5" width="9" height="5" fill="#fff"/><rect x="3" y="9" width="10" height="6" fill="#f0f0f0"/><rect x="4" y="10.5" width="8" height="1.2" fill="#e03030"/><rect x="4" y="12.5" width="8" height="1" fill="#e03030"/></svg>
<div class="s" style="left:361px;top:980px">Total Commander 7.01 - ...</div>
<div class="btn" style="left:501px;top:975px;width:159px;height:22px"></div>
<svg class="a" style="left:505px;top:978px" width="16" height="16" viewBox="0 0 16 16"><circle cx="8" cy="8" r="7.2" fill="#303030"/><path d="M2 6 Q8 3 14 9 M1.5 9 Q8 6 13 13 M4 3 Q9 2 15 7" fill="none" stroke="#909090" stroke-width="0.8"/></svg>
<div class="s" style="left:524px;top:980px">D:\practice\code\test2.a...</div>
<div class="btn" style="left:664px;top:975px;width:159px;height:22px"></div>
<svg class="a" style="left:668px;top:978px" width="16" height="16" viewBox="0 0 16 16"><circle cx="8" cy="8" r="7.2" fill="#404a78"/><circle cx="8" cy="8" r="5.5" fill="#6a78b0"/><path d="M8 3.5 L12 11 H4 Z" fill="#fff"/><path d="M8 6.5 L10 10 H6 Z" fill="#404a78"/></svg>
<div class="s" style="left:687px;top:980px">AutoIt v3 Window Info</div>
<div class="btn" style="left:827px;top:975px;width:159px;height:22px"></div>
<svg class="a" style="left:831px;top:978px" width="16" height="16" viewBox="0 0 16 16"><path d="M3 2 L11 1 L14 13 L6 15 Z" fill="#58a8e8"/><path d="M4 3 L10.5 2.2 L12.8 12 L6.5 13.6 Z" fill="#a8d8f8"/></svg>
<div class="s" style="left:850px;top:980px">test2.ini - Notepad</div>
<div class="btn" style="left:175px;top:1000px;width:159px;height:22px"></div>
<svg class="a" style="left:179px;top:1003px" width="17" height="17" viewBox="0 0 17 17"><circle cx="8.5" cy="8.5" r="6.5" fill="#2a8ae0"/><circle cx="8.5" cy="8.5" r="3.2" fill="#d8f0ff"/><rect x="4" y="8" width="10" height="1.6" fill="#2a8ae0"/><rect x="8.5" y="9.6" width="6" height="2.5" fill="#d8f0ff"/><path d="M1.5 14.5 C3 9 9 3 15.5 1.5" fill="none" stroke="#f0c020" stroke-width="1.6"/></svg>
<div class="s" style="left:198px;top:1005px">Gmail - Inbox (297) - Win...</div>
<div class="btn" style="left:338px;top:1000px;width:159px;height:22px"></div>
<svg class="a" style="left:342px;top:1003px" width="16" height="16" viewBox="0 0 16 16"><path d="M4 1 H11 L14 4 V15 H4 Z" fill="#fff" stroke="#7080a0"/><path d="M6 5 H12 M6 7 H12 M6 9 H12 M6 11 H12" stroke="#a0a8c0"/><rect x="1" y="3" width="8" height="8" fill="#2850b0"/><text x="2" y="10" font-family="Liberation Sans" font-weight="bold" font-size="8" fill="#fff">W</text></svg>
<div class="s" style="left:361px;top:1005px">database.doc - Microsoft...</div>
<div class="a" style="left:501px;top:1000px;width:159px;height:22px;box-shadow:inset 1px 1px #404040,inset -1px -1px #fff,inset 2px 2px #808080,inset -2px -2px #d4d0c8;background-color:#e8e6e0;background-image:repeating-conic-gradient(#fff 0 25%,#d4d0c8 0 50%);background-size:2px 2px"></div>
<svg class="a" style="left:506px;top:1004px" width="18" height="16" viewBox="0 0 18 16"><text x="0" y="14.5" font-family="Liberation Sans" font-weight="bold" font-size="16" fill="#1a1aa8" letter-spacing="-1">SI</text></svg>
<div class="s" style="left:525px;top:1006px;font-weight:bold;letter-spacing:0.3px">FaceGen Modeller 3.1 ...</div>
<div class="btn" style="left:664px;top:1000px;width:159px;height:22px"></div>
<svg class="a" style="left:668px;top:1003px" width="16" height="16" viewBox="0 0 16 16"><path d="M1 5 H8 L10 7 V15 H1 Z" fill="#fff" stroke="#606060"/><path d="M3 8 H8 M3 10 H8 M3 12 H8" stroke="#808080"/><text x="7" y="10" font-family="Liberation Sans" font-weight="bold" font-size="11" fill="#e8d000" stroke="#404000" stroke-width="0.5">?</text></svg>
<div class="s" style="left:687px;top:1005px">AutoIt Help</div>
<div class="vl" style="left:1134px;top:977px;height:43px;width:2px;background:#fff"></div><div class="vl" style="left:1136px;top:977px;height:43px;background:#808080"></div>
<div class="a" style="left:1145px;top:990px;width:17px;height:17px;background:#0a246a;color:#fff;font:11px/17px 'Liberation Sans',sans-serif;text-align:center">EN</div>
<div class="vl" style="left:1165px;top:985px;height:26px;background:#808080"></div><div class="vl" style="left:1166px;top:985px;height:26px;background:#fff"></div>
<div class="a" style="left:1172px;top:975px;width:106px;height:47px;box-shadow:inset 1px 1px #808080,inset -1px -1px #fff"></div>
<svg class="a" style="left:1177px;top:996px" width="9" height="7" viewBox="0 0 9 7"><path d="M4 0.5 L1 3.5 L4 6.5 M8 0.5 L5 3.5 L8 6.5" fill="none" stroke="#000" stroke-width="1.5"/></svg>
<svg class="a" style="left:1190px;top:980px" width="15" height="18" viewBox="0 0 15 18"><path d="M7.5 1 Q11 3 14 2.5 Q14.5 12 7.5 17 Q0.5 12 1 2.5 Q4 3 7.5 1 Z" fill="#f0d820" stroke="#7060a0" stroke-width="1"/><rect x="6.8" y="5" width="1.6" height="5" fill="#402000"/><rect x="6.8" y="11.5" width="1.6" height="1.6" fill="#402000"/></svg>
<div class="s" style="left:1221px;top:983px">1:47 PM</div>
<div class="s" style="left:1213px;top:1002px">Wednesday</div>
</body></html>
